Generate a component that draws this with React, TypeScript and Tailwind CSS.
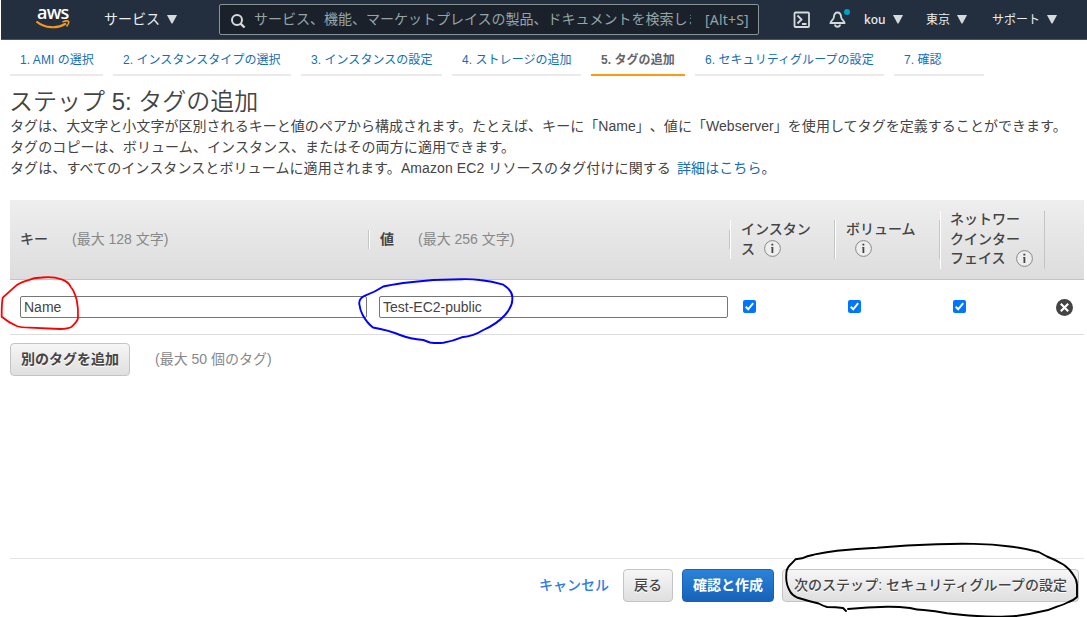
import type { ReactNode } from "react";

const tabs = [
  { label: "1. AMI の選択", width: "w-[93px]" },
  { label: "2. インスタンスタイプの選択", width: "w-[178px]" },
  { label: "3. インスタンスの設定", width: "w-[141px]" },
  { label: "4. ストレージの追加", width: "w-[129px]" },
  { label: "5. タグの追加", width: "w-[94px]", active: true },
  { label: "6. セキュリティグループの設定", width: "w-[189px]" },
  { label: "7. 確認", width: "w-[90px]" },
];

function Caret() {
  return (
    <svg width="10" height="9" viewBox="0 0 10 9" className="shrink-0">
      <path d="M0 0H10L5.5 8.5H4.5Z" fill="#d5dbdb" />
    </svg>
  );
}

function AwsLogo() {
  return (
    <div className="relative h-[26px] w-[34px]">
      <div className="absolute top-[-5px] left-[1px] text-[18px] leading-[20px] font-semibold tracking-[-0.8px] text-white [font-family:'Open_Sans',sans-serif]">
        aws
      </div>
      <svg className="absolute top-[13px] left-0" width="34" height="10" viewBox="0 0 34 10" fill="none">
        <path d="M.5 1.5C9 8.500 21 9 30 3.500" stroke="#f7981d" strokeWidth="2.200" />
        <path d="M26.500 1.900C29 .9 32 .8 32.500 1.500C33 2.400 31.800 5 30.500 6.500" stroke="#f7981d" strokeWidth="1.600" />
      </svg>
    </div>
  );
}

function InfoIcon({ className = "" }: { className?: string }) {
  return (
    <svg className={`relative -top-px inline-block shrink-0 ${className}`} width="17" height="17" viewBox="0 0 17 17">
      <circle cx="8.5" cy="8.5" r="7.9" fill="#eee" stroke="#888" />
      <path d="M7.2 7H9.3V13H7.5V8H7.2ZM7.4 3.8H9.3V5.5H7.4Z" fill="#444" />
    </svg>
  );
}

function HeaderCell({ width, left, right, height, children }: { width: string; left?: boolean; right?: boolean; height: string; children?: ReactNode }) {
  return (
    <div className={`flex h-full shrink-0 items-center ${width}`}>
      <div
        className={`flex w-full flex-col justify-center border-l pl-[9px] ${height} ${left ? "border-l-white" : "border-l-transparent"} ${right ? "border-r border-r-[#c4c4c4]" : ""}`}
      >
        {children}
      </div>
    </div>
  );
}

function Checkbox() {
  return (
    <span className="mb-[2px] flex size-[13px] items-center justify-center rounded-[2px] bg-[#0075ff]">
      <svg width="13" height="13" viewBox="0 0 13 13" fill="none">
        <path d="M2.7 6.8L5.2 9.3L10.2 3.2" stroke="#fff" strokeWidth="2" />
      </svg>
    </span>
  );
}

function Button({ width, primary, weight = "font-bold", children }: { width: string; primary?: boolean; weight?: string; children: ReactNode }) {
  return (
    <button
      className={`flex h-[33px] shrink-0 items-center justify-center rounded-[4px] border text-[14px] whitespace-nowrap ${weight} ${width} ${
        primary
          ? "border-[#1a62b4] bg-linear-to-b from-[#2b82d9] to-[#1563b8] text-white"
          : "border-[#c4c4c4] bg-linear-to-b from-[#f6f6f6] to-[#dfdfdf] text-[#444] [text-shadow:0_1px_0_#fff]"
      }`}
    >
      {children}
    </button>
  );
}

export default function App() {
  return (
    <div className="relative flex h-[617px] w-[1087px] flex-col overflow-hidden bg-white text-[14px] text-[#444] [font-family:'Liberation_Sans','Noto_Sans_CJK_JP',sans-serif] [text-spacing-trim:space-all]">
      <header className="ml-px flex h-[40px] shrink-0 items-center border-b border-[#4b5462] bg-[#232f3e] text-[12px] text-[#eaeded]">
        <div className="ml-[35px] shrink-0 pt-[1px]">
          <AwsLogo />
        </div>
        <div className="ml-[34px] flex w-[115px] shrink-0 items-center gap-[7px] text-[14px]">
          サービス
          <Caret />
        </div>
        <div className="flex h-[31px] w-[540px] shrink-0 items-center rounded-[2px] border border-[#879596] bg-[#1a212b] text-[14px] text-[#95a5a6]">
          <svg className="mt-[2px] ml-[10px] shrink-0" width="16" height="16" viewBox="0 0 16 16" fill="none" stroke="#d5dbdb" strokeWidth="2">
            <circle cx="7" cy="7" r="5" />
            <path d="M10.5 10.5L14.5 14.5" strokeWidth="2.4" />
          </svg>
          <span className="ml-[8px] w-[437px] overflow-hidden whitespace-nowrap">
            サービス、機能、マーケットプレイスの製品、ドキュメントを検索します
          </span>
          <span className="ml-[14px] text-[14px] tracking-[0.2px] [font-family:'Noto_Sans',sans-serif]">[Alt+S]</span>
        </div>
        <svg className="ml-[34px] shrink-0" width="18" height="18" viewBox="0 0 18 18" fill="none" stroke="#d5dbdb" strokeWidth="1.8">
          <rect x="1.5" y="1.5" width="14.5" height="14.5" rx="1" />
          <path d="M4.5 4.5L8.5 8.5L4.5 12.5M9 13H13.5" />
        </svg>
        <div className="relative ml-[18px] h-[20px] w-[22px] shrink-0">
          <svg className="absolute top-[1px] left-0" width="18" height="18" viewBox="0 0 18 18" fill="none" stroke="#d5dbdb" strokeWidth="1.8">
            <path d="M8.5 1.5C5.5 1.5 5 4 4.8 6.5C4.5 9 1.5 10 1.5 12H15.5C15.5 10 12.5 9 12.2 6.5C12 4 11.5 1.5 8.5 1.5Z" />
            <path d="M6 13.5C6 16.5 11 16.5 11 13.5" />
          </svg>
          <span className="absolute top-[-1px] left-[15px] size-[6px] rounded-full bg-[#00a1c9]" />
        </div>
        <div className="ml-[13px] flex w-[62px] shrink-0 items-center gap-[7px] font-medium [font-family:'Noto_Sans',sans-serif]">
          kou
          <Caret />
        </div>
        <div className="flex w-[66px] shrink-0 items-center gap-[7px]">
          東京
          <Caret />
        </div>
        <div className="flex shrink-0 items-center gap-[7px]">
          サポート
          <Caret />
        </div>
      </header>

      <nav className="ml-[10px] flex h-[36px] shrink-0 gap-[10px] text-[12px] tracking-[0.05px] text-[#146eb4]">
        {tabs.map((tab) => (
          <div
            key={tab.label}
            className={`shrink-0 border-b-2 pt-[11px] pl-[10px] leading-[18px] whitespace-nowrap ${tab.width} ${
              tab.active ? "border-[#ff9914] font-bold text-[#666]" : "border-[#eaeaea]"
            }`}
          >
            {tab.label}
          </div>
        ))}
      </nav>

      <h1 className="mt-[12px] ml-[9px] h-[28px] shrink-0 text-[24px] leading-[28px] font-[350] whitespace-nowrap">
        ステップ 5: タグの追加
      </h1>
      <div className="ml-[10px] h-[84px] shrink-0 leading-[21px] whitespace-nowrap">
        <p className="tracking-[0.04px]">
          タグは、大文字と小文字が区別されるキーと値のペアから構成されます。たとえば、キーに「Name」、値に「Webserver」を使用してタグを定義することができます。
        </p>
        <p className="tracking-[0.1px]">タグのコピーは、ボリューム、インスタンス、またはその両方に適用できます。</p>
        <p className="tracking-[0.1px]">
          タグは、すべてのインスタンスとボリュームに適用されます。Amazon EC2 リソースのタグ付けに関する <span className="ml-[2px] text-[#146eb4]">詳細はこちら</span>。
        </p>
      </div>

      <section className="ml-[10px] w-[1074px] shrink-0">
        <div className="flex h-[80px] border-b border-[#c4c4c4] bg-linear-to-b from-[#eeeeee] to-[#dddddd] leading-[19.5px] font-medium">
          <HeaderCell width="w-[359px]" height="h-[19px]" right>
            <div className="whitespace-nowrap">
              キー<span className="ml-[24px] font-normal text-[#888]">(最大 128 文字)</span>
            </div>
          </HeaderCell>
          <HeaderCell width="w-[361px]" height="h-[19px]" left right>
            <div className="whitespace-nowrap">
              <span className="ml-[1px] font-bold">値</span>
              <span className="ml-[24px] font-normal text-[#888]">(最大 256 文字)</span>
            </div>
          </HeaderCell>
          <HeaderCell width="w-[105px]" height="h-[39px]" left right>
            <div className="pl-[1px]">インスタン</div>
            <div className="flex items-center pl-[1px]">
              ス<InfoIcon className="ml-[9px]" />
            </div>
          </HeaderCell>
          <HeaderCell width="w-[105px]" height="h-[39px]" left right>
            <div className="pl-[1px]">ボリューム</div>
            <div className="flex h-[19.5px] items-center">
              <InfoIcon className="ml-[10px]" />
            </div>
          </HeaderCell>
          <HeaderCell width="w-[105px]" height="h-[58px]" left right>
            <div>ネットワー</div>
            <div>クインター</div>
            <div className="flex items-center">
              フェイス<InfoIcon className="ml-[10px]" />
            </div>
          </HeaderCell>
        </div>
        <div className="flex h-[55px] items-center border-b border-[#ddd] pl-[10px]">
          <div className="flex h-[22px] w-[347px] shrink-0 items-center rounded-[2px] border border-[#767676] pl-[3px]">Name</div>
          <div className="ml-[12px] flex h-[22px] w-[349px] shrink-0 items-center rounded-[2px] border border-[#767676] pl-[3px]">Test-EC2-public</div>
          <div className="ml-[15px] w-[105px] shrink-0">
            <Checkbox />
          </div>
          <div className="w-[105px] shrink-0">
            <Checkbox />
          </div>
          <div className="w-[103px] shrink-0">
            <Checkbox />
          </div>
          <svg className="mt-px shrink-0" width="17" height="17" viewBox="0 0 17 17">
            <circle cx="8.5" cy="8.5" r="8.5" fill="#444" />
            <path d="M4.8 4.8L12.2 12.2M12.2 4.8L4.8 12.2" stroke="#fff" strokeWidth="2.2" />
          </svg>
        </div>
        <div className="mt-[8px] flex items-center">
          <Button width="w-[120px]">別のタグを追加</Button>
          <span className="ml-[25px] text-[#888]">(最大 50 個のタグ)</span>
        </div>
      </section>

      <footer className="mt-auto ml-[10px] flex h-[59px] w-[1074px] shrink-0 items-start border-t border-[#e5e5e5] pt-[10px]">
        <a className="ml-[529px] w-[84px] shrink-0 leading-[32px] font-medium text-[#2b7de1]">キャンセル</a>
        <Button width="w-[50px]" weight="font-medium">
          戻る
        </Button>
        <div className="w-[9px] shrink-0" />
        <Button width="w-[92px]" primary>
          確認と作成
        </Button>
        <div className="w-[8px] shrink-0" />
        <Button width="w-[297px]" weight="font-medium tracking-[0.05px]">
          次のステップ: セキュリティグループの設定
        </Button>
      </footer>

      <svg className="pointer-events-none absolute top-0 left-0" width="1087" height="617" viewBox="0 0 1087 617" fill="none" strokeLinejoin="round" strokeLinecap="round">
        <path
          d="M2.7 297.7Q1.5 305 1.7 316.7Q8 322 16.7 326Q21 327.5 30 327.7L60 329Q68 329 71.7 326.7Q77 322 78 318.3Q78.5 308 76.7 300Q74 290 71 287.3Q69 282 61.7 279.3Q52 276 41.7 277.5Q34 277.5 26.7 280.7Q19 283 15 286.7Z"
          stroke="#f00"
          strokeWidth="1.8"
        />
        <path
          d="M365 295.7Q358 299 359.5 305Q360 310 362.7 315Q367 323 373 327.500Q388 330 400 335Q410 339 423.300 340L430 342.500Q437 343.500 443.300 342.700Q453 341 461.700 337.300Q474 336 483.300 330Q497 324 505 315Q513 306 512.300 298.300Q513 291 503.300 284.700Q492 281 480 280Q472 279 461.700 279.200L433.300 280Q417 281.500 403.300 283Q390 285 383.300 286.500Q375 292 365 295.700Z"
          stroke="#00f"
          strokeWidth="1.9"
        />
        <path
          d="M846 611L843 608Q836 607 827 607Q823 606 818.7 603.5Q808 601 797 597.5Q792 595 790.3 591.7Q785.500 584 786.300 575Q786 569 790 565Q793 562 795.500 559.300L802 558.300Q807 556 813.700 554.700Q825 552 837 550.700Q857 548.500 877 547.700Q907 545 937 544.300Q957 543.500 973.700 543.900Q993 544 1010 546.500Q1026 548.500 1038.700 552L1047 556.500Q1056 560 1063.700 564.700Q1070 569 1073.700 575.500Q1077 580 1077 585V597Q1074 600 1068.700 602Q1063 605 1057 606.700Q1048 611 1038.700 612Q1023 616 1007 616.500Q990 617 977 616Q960 615 947 613.300Q935 611 923.700 610Q917 610 910 608Q898 606.500 887 606.700Q868 607 848 609"
          stroke="#000"
          strokeWidth="1.9"
        />
      </svg>
    </div>
  );
}
